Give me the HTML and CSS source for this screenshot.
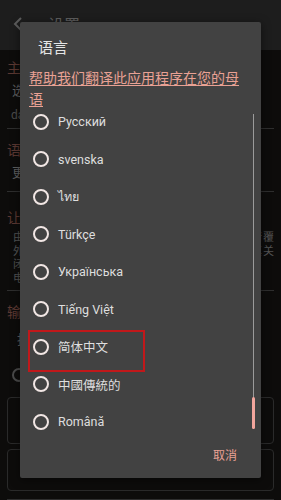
FILE: index.html
```html
<!DOCTYPE html>
<html lang="zh">
<head>
    <meta charset="UTF-8">
    <meta name="viewport" content="width=device-width, initial-scale=1.0">
    <title>设置</title>
    <link rel="stylesheet" href="styles.css">
</head>
<body>
    <header class="topbar">
        <span class="back">
            <svg width="10" height="14" viewBox="0 0 10 14"><path d="M8 1 L2 7 L8 13" fill="none" stroke="#5c5c5c" stroke-width="2"/></svg>
        </span>
        <span class="topbar-title">设置</span>
    </header>

    <main class="settings">
        <div class="group-title first">主题</div>
        <div class="item">选择主题</div>
        <div class="item-sub">dark</div>
        <div class="divider d1"></div>

        <div class="group-title g2">语言</div>
        <div class="item">更改语言</div>
        <div class="divider d2"></div>

        <div class="group-title g3">让应用在后台运行</div>
        <div class="para">
            <div class="just">由于系统省电策略，应用在后台可能被暂停，请覆</div>
            <div class="just">外开启后台运行权限，并在电池优化设置中将其关</div>
            <div>闭此功能。</div>
            <div>电池优化</div>
        </div>
        <div class="divider d3"></div>

        <div class="group-title g4">输入</div>
        <div class="item indent">指定输入法</div>
        <div class="radio-row"><span class="bg-radio"></span></div>
        <div class="card c1"></div>
        <div class="card c2"></div>
        <div class="divider d4"></div>
    </main>

    <div class="dialog">
        <div class="dialog-title">语言</div>
        <a class="help-link" href="#">帮助我们翻译此应用程序在您的母语</a>
        <div class="lang-scroll">
            <ul class="lang-list">
                <li><span class="radio"></span><span class="lang">Русский</span></li>
                <li><span class="radio"></span><span class="lang">svenska</span></li>
                <li><span class="radio"></span><span class="lang">ไทย</span></li>
                <li><span class="radio"></span><span class="lang">Türkçe</span></li>
                <li><span class="radio"></span><span class="lang">Українська</span></li>
                <li><span class="radio"></span><span class="lang">Tiếng Việt</span></li>
                <li><span class="radio"></span><span class="lang">简体中文</span></li>
                <li><span class="radio"></span><span class="lang">中國傳統的</span></li>
                <li><span class="radio"></span><span class="lang">Română</span></li>
            </ul>
            <div class="scroll-track"></div>
            <div class="scroll-thumb"></div>
        </div>
        <div class="dialog-actions">
            <button class="cancel">取消</button>
        </div>
    </div>

    <div class="highlight"></div>
</body>
</html>
```

FILE: styles.css
```css
body {
    margin: 0;
    background-color: #0d0c0b;
    font-family: Roboto, "Noto Sans CJK SC", sans-serif;
    width: 281px;
    height: 500px;
    overflow: hidden;
    position: relative;
}

.topbar {
    height: 50px;
    background-color: #1d1d1d;
    display: flex;
    align-items: center;
    padding-left: 13px;
    box-sizing: border-box;
}

.back {
    display: flex;
    margin-top: -2px;
}

.topbar-title {
    margin-left: 25px;
    margin-top: -2px;
    font-size: 16px;
    color: #5e5e5e;
    font-family: "Noto Sans CJK SC", sans-serif;
}

.settings {
    padding: 0 7px;
    font-family: "Noto Sans CJK SC", sans-serif;
}

.group-title {
    font-size: 14px;
    line-height: 20px;
    color: #5b3832;
}

.group-title.first { padding-top: 7px; }
.group-title.g2 { margin-top: 10px; }
.group-title.g3 { margin-top: 15px; }
.group-title.g4 { margin-top: 10px; }

.item {
    font-size: 13px;
    line-height: 20px;
    color: #5f5f5f;
    margin-top: 3px;
    padding-left: 5px;
}

.item.indent {
    margin-top: 8px;
    padding-left: 10px;
}

.item-sub {
    font-family: Roboto, sans-serif;
    font-size: 12px;
    line-height: 16px;
    color: #4c4c4c;
    margin-top: 7px;
    padding-left: 4px;
}

.divider {
    height: 1px;
    background-color: #2e2e2e;
}

.d1 { margin-top: 5px; }
.d2 { margin-top: 9px; }
.d3 { margin-top: 6px; }
.d4 { margin-top: 8px; }

.para {
    font-size: 11px;
    line-height: 13.5px;
    color: #535353;
    padding-left: 6px;
    margin-top: 3px;
}

.just {
    text-align: justify;
    text-align-last: justify;
}

.radio-row {
    margin-top: 19px;
    height: 14px;
    padding-left: 5px;
}

.bg-radio {
    display: block;
    width: 10px;
    height: 10px;
    border: 2px solid #4a4a4a;
    border-radius: 50%;
}

.card {
    border: 1px solid #2a2a2a;
    border-radius: 4px;
    box-sizing: border-box;
}

.c1 {
    margin-top: 15px;
    height: 47px;
}

.c2 {
    margin-top: 5px;
    height: 42px;
}

/* dialog over the settings page */
.dialog {
    position: absolute;
    left: 20px;
    top: 22px;
    width: 241px;
    height: 456px;
    background-color: #424242;
    border-radius: 2px;
    box-shadow: 0 2px 10px rgba(0, 0, 0, 0.5);
    display: flex;
    flex-direction: column;
}

.dialog-title {
    font-family: "Noto Sans CJK SC", sans-serif;
    font-size: 15px;
    line-height: 20px;
    color: #e6e6e6;
    padding: 15px 0 0 18px;
}

.help-link {
    display: block;
    margin: 10px 0 0 9px;
    width: 216px;
    font-family: "Noto Sans CJK SC", sans-serif;
    font-size: 14px;
    line-height: 21px;
    color: #e9a194;
    text-decoration: underline;
    text-underline-offset: 2px;
}

.lang-scroll {
    position: relative;
    height: 328px;
    overflow: hidden;
}

.lang-list {
    list-style: none;
    margin: -6px 0 0;
    padding: 0;
}

.lang-list li {
    height: 37.5px;
    display: flex;
    align-items: center;
    padding-left: 13px;
}

.radio {
    width: 12px;
    height: 12px;
    border: 2px solid #f1e6e4;
    border-radius: 50%;
    flex-shrink: 0;
}

.lang {
    margin-left: 9px;
    font-size: 12.5px;
    color: #dedede;
    font-family: Roboto, "Noto Sans CJK SC", sans-serif;
}

.scroll-track {
    position: absolute;
    left: 233px;
    top: 5px;
    width: 1px;
    height: 315px;
    background-color: #9b9b9b;
}

.scroll-thumb {
    position: absolute;
    left: 232px;
    top: 288px;
    width: 3px;
    height: 32px;
    border-radius: 1.5px;
    background-color: #f2a59d;
}

.dialog-actions {
    display: flex;
    justify-content: flex-end;
    padding-right: 20px;
    margin-top: auto;
    margin-bottom: 10px;
}

.cancel {
    background: none;
    border: none;
    padding: 4px;
    font-family: "Noto Sans CJK SC", sans-serif;
    font-size: 12px;
    line-height: 18px;
    color: #e9a194;
}

.highlight {
    position: absolute;
    left: 28px;
    top: 330px;
    width: 113px;
    height: 38px;
    border: 2px solid #c1181a;
}
```
